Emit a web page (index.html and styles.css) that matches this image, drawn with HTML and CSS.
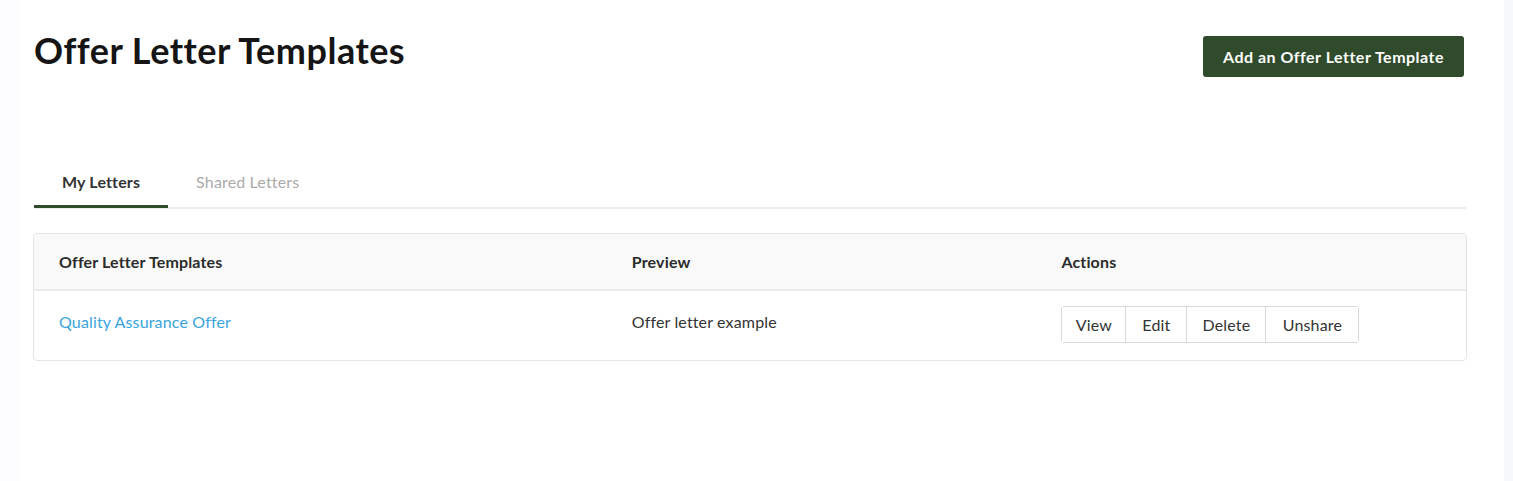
FILE: index.html
```html
<!DOCTYPE html>
<html lang="en">
<head>
    <meta charset="UTF-8">
    <meta name="viewport" content="width=device-width, initial-scale=1.0">
    <title>Offer Letter Templates</title>
    <link rel="stylesheet" href="styles.css">
</head>
<body>
    <div class="side-left"></div>
    <main class="content">
        <div class="page-header">
            <h1>Offer Letter Templates</h1>
            <button class="add-btn">Add an Offer Letter Template</button>
        </div>

        <div class="tabs">
            <div class="tab active">My Letters</div>
            <div class="tab">Shared Letters</div>
        </div>

        <div class="card">
            <table class="letters-table">
                <thead>
                    <tr>
                        <th class="col-name">Offer Letter Templates</th>
                        <th class="col-preview">Preview</th>
                        <th>Actions</th>
                    </tr>
                </thead>
                <tbody>
                    <tr>
                        <td><a href="#" class="letter-link">Quality Assurance Offer</a></td>
                        <td>Offer letter example</td>
                        <td>
                            <div class="btn-group">
                                <button class="view-btn">View</button>
                                <button class="edit-btn">Edit</button>
                                <button class="delete-btn">Delete</button>
                                <button class="unshare-btn">Unshare</button>
                            </div>
                        </td>
                    </tr>
                </tbody>
            </table>
        </div>
    </main>
    <div class="side-right"></div>
</body>
</html>
```

FILE: styles.css
```css
body {
    font-family: Lato, "Open Sans", sans-serif;
    margin: 0;
    display: flex;
    min-height: 481px;
    background-color: #fff;
    color: #333;
    letter-spacing: 0.15px;
}

.side-left {
    width: 20px;
    background-color: #fcfcfe;
}

.side-right {
    width: 9px;
    background-color: #f6f8fb;
}

.content {
    flex: 1;
    padding: 0 37px 0 13px;
    background-color: #fff;
}

.page-header {
    display: flex;
    justify-content: space-between;
    align-items: flex-start;
    padding-top: 28px;
    padding-left: 1px;
}

h1 {
    margin: 0;
    font-size: 36px;
    font-weight: 700;
    color: #151515;
    line-height: 44px;
    letter-spacing: 0.5px;
}

.add-btn {
    margin-top: 8px;
    margin-right: 3px;
    width: 261px;
    height: 41px;
    padding: 0;
    font-family: inherit;
    font-size: 16px;
    font-weight: 700;
    letter-spacing: 0.5px;
    color: #fff;
    background-color: #2f4b2c;
    border: none;
    border-radius: 3px;
    cursor: pointer;
}

.tabs {
    display: flex;
    margin: 87px 1px 0 1px;
    border-bottom: 2px solid #eee;
}

.tab {
    padding: 0 28px;
    height: 45px;
    line-height: 35px;
    font-size: 16px;
    color: #aaa;
    margin-bottom: -2px;
}

.tab.active {
    color: #333;
    font-weight: 700;
    border-bottom: 3px solid #2f4b2c;
    height: 41px;
}

.card {
    margin-top: 24px;
    border: 1px solid #e5e5e5;
    border-radius: 4px;
    overflow: hidden;
}

.letters-table {
    width: 100%;
    border-collapse: collapse;
}

th, td {
    text-align: left;
    padding: 0 25px;
    font-size: 16px;
}

th {
    height: 55px;
    background-color: #f9f9f9;
    font-weight: 700;
    color: #2b2b2b;
    border-bottom: 2px solid #ebebeb;
}

td {
    height: 61px;
    padding-bottom: 8px;
    color: #333;
}

.col-name {
    width: 40%;
}

.col-preview {
    width: 30%;
}

.letter-link {
    color: #3aa4dc;
    text-decoration: none;
}

.btn-group {
    display: inline-flex;
    vertical-align: middle;
    margin-top: 6px;
    border: 1px solid #d9d9d9;
    border-radius: 3px;
}

.btn-group button {
    height: 35px;
    padding: 0;
    font-family: inherit;
    font-size: 16px;
    letter-spacing: 0.15px;
    color: #333;
    background-color: #fff;
    border: none;
    border-left: 1px solid #d9d9d9;
    cursor: pointer;
}

.btn-group button:first-child {
    border-left: none;
}

.view-btn {
    width: 63px;
}

.edit-btn {
    width: 61px;
}

.delete-btn {
    width: 79px;
}

.unshare-btn {
    width: 93px;
}
```
